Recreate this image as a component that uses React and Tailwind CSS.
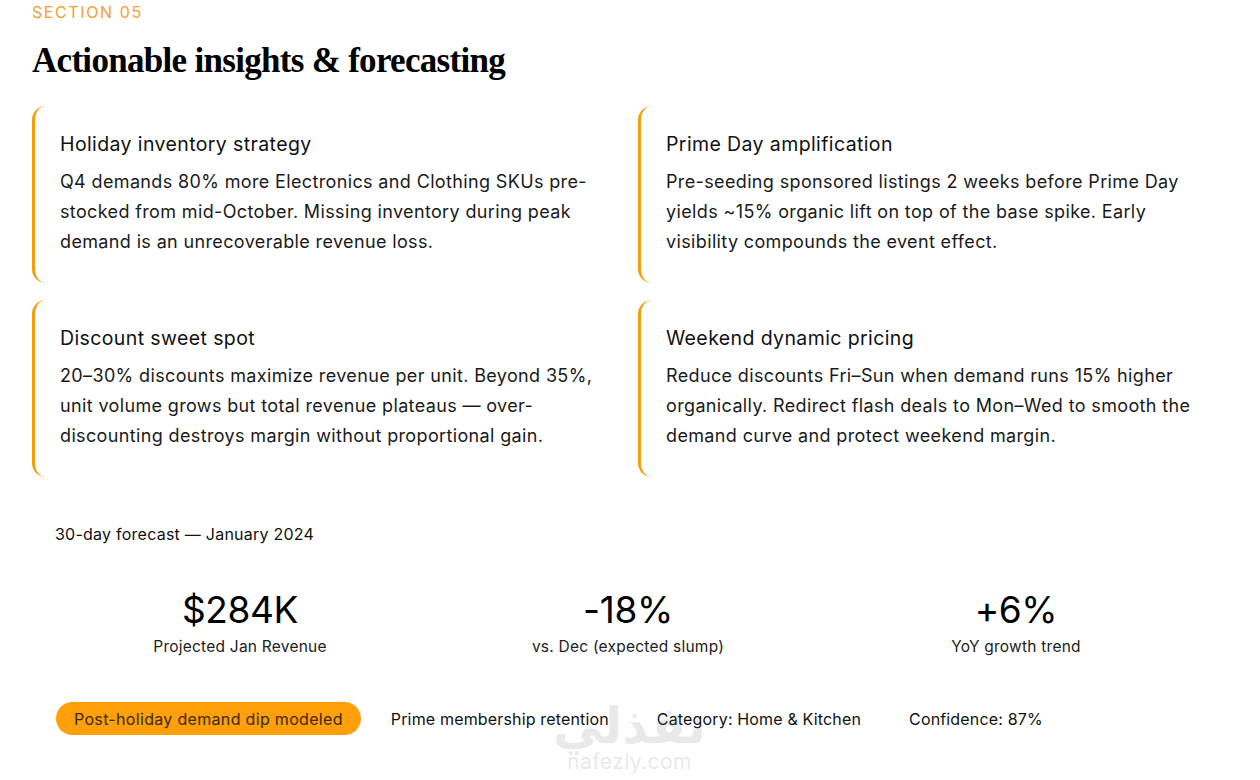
import React from "react";

const cards = [
  {
    title: "Holiday inventory strategy",
    body: "Q4 demands 80% more Electronics and Clothing SKUs pre-stocked from mid-October. Missing inventory during peak demand is an unrecoverable revenue loss.",
  },
  {
    title: "Prime Day amplification",
    body: "Pre-seeding sponsored listings 2 weeks before Prime Day yields ~15% organic lift on top of the base spike. Early visibility compounds the event effect.",
  },
  {
    title: "Discount sweet spot",
    body: "20–30% discounts maximize revenue per unit. Beyond 35%, unit volume grows but total revenue plateaus — over-discounting destroys margin without proportional gain.",
  },
  {
    title: "Weekend dynamic pricing",
    body: "Reduce discounts Fri–Sun when demand runs 15% higher organically. Redirect flash deals to Mon–Wed to smooth the demand curve and protect weekend margin.",
  },
];

const stats = [
  { value: "$284K", label: "Projected Jan Revenue" },
  { value: "-18%", label: "vs. Dec (expected slump)" },
  { value: "+6%", label: "YoY growth trend" },
];

const pills = [
  "Prime membership retention",
  "Category: Home & Kitchen",
  "Confidence: 87%",
];

export default function App() {
  return (
    <div
      className="relative w-[1260px] h-[780px] overflow-hidden bg-white text-[#111111]"
      style={{ fontFamily: "Inter, 'Noto Sans', sans-serif" }}
    >
      <div className="px-[32px] pt-[2px]">
        <div className="text-[16px] tracking-[0.1em] text-[#f5a030] leading-[20px]">
          SECTION 05
        </div>
        <h1
          className="mt-[19px] text-[35px] font-bold leading-[40px] tracking-[-0.02em] text-black"
          style={{ fontFamily: "'Liberation Serif', 'DejaVu Serif', serif" }}
        >
          Actionable insights &amp; forecasting
        </h1>

        <div className="mt-[25px] grid grid-cols-2 gap-x-[16px] gap-y-[17px] w-[1196px]">
          {cards.map((c) => (
            <div
              key={c.title}
              className="h-[177px] rounded-[14px] border-l-[3px] border-[#f59e0b] pl-[25px] pr-[22px] pt-[24px]"
            >
              <div className="text-[19.5px] leading-[28px] tracking-[0.02em] text-[#111]">
                {c.title}
              </div>
              <p className="mt-[9px] text-[18px] leading-[30px] tracking-[0.02em] text-[#1a1a1a]">
                {c.body}
              </p>
            </div>
          ))}
        </div>

        <div className="mt-[45px] pl-[23px] text-[16px] leading-[24px] tracking-[0.015em] text-[#111]">
          30-day forecast — January 2024
        </div>

        <div className="mt-[42px] ml-[14px] w-[1164px] grid grid-cols-3">
          {stats.map((s) => (
            <div key={s.label} className="flex flex-col items-center">
              <div className="text-[37px] leading-[44px] tracking-[-0.01em] text-black">
                {s.value}
              </div>
              <div className="mt-[3px] text-[15.5px] leading-[24px] tracking-[0.015em] text-[#222]">
                {s.label}
              </div>
            </div>
          ))}
        </div>

        <div className="mt-[43px] ml-[24px] flex items-center gap-[12px]">
          <div className="h-[33px] rounded-full bg-[#ff9f0a] px-[18px] flex items-center text-[16px] tracking-[0.02em] text-[#3a2a12]">
            Post-holiday demand dip modeled
          </div>
          {pills.map((p) => (
            <div
              key={p}
              className="h-[33px] rounded-full px-[18px] flex items-center text-[16px] tracking-[0.01em] text-[#111]"
            >
              {p}
            </div>
          ))}
        </div>
      </div>

      <div className="pointer-events-none absolute left-[553px] top-[698px] flex flex-col items-center opacity-15">
        <div
          className="text-[50px] font-bold leading-[52px] text-gray-500"
          style={{ fontFamily: "'Noto Sans', 'DejaVu Sans', sans-serif" }}
        >
          نفذلي
        </div>
        <div className="text-[21px] leading-[24px] text-gray-500 tracking-[0.02em]">
          nafezly.com
        </div>
      </div>
    </div>
  );
}
